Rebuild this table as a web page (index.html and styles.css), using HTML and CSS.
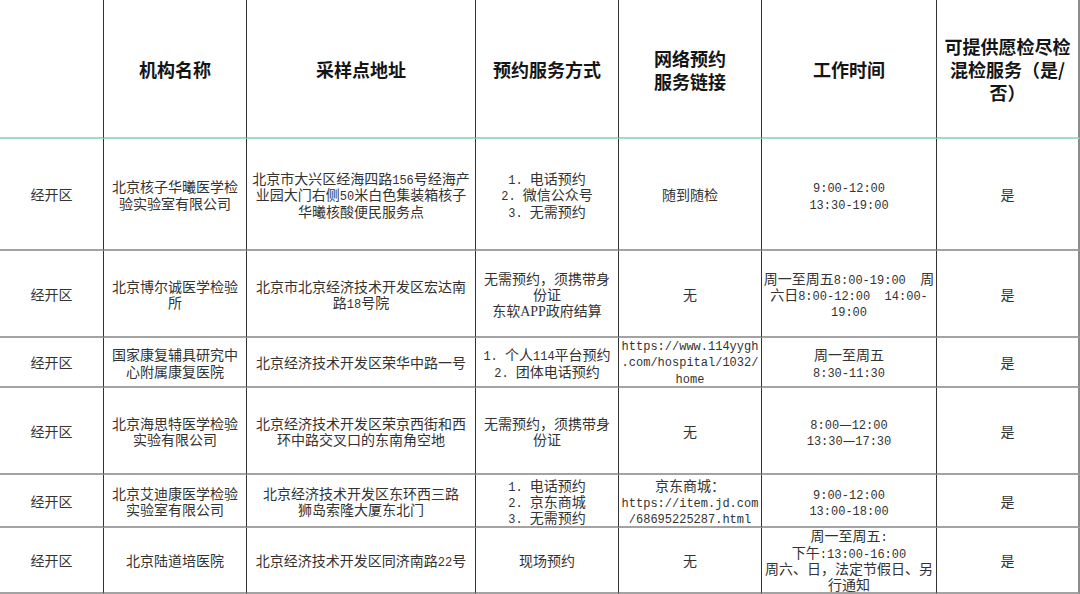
FILE: index.html
```html
<!DOCTYPE html>
<html lang="zh-CN">
<head>
<meta charset="utf-8">
<title>核酸检测采样点</title>
<link rel="stylesheet" href="styles.css">
</head>
<body>
<div class="sheet">
  <div class="cell head"><p class="txt"></p></div>
  <div class="cell head"><p class="txt">机构名称</p></div>
  <div class="cell head"><p class="txt">采样点地址</p></div>
  <div class="cell head"><p class="txt">预约服务方式</p></div>
  <div class="cell head"><p class="txt">网络预约<br>服务链接</p></div>
  <div class="cell head"><p class="txt">工作时间</p></div>
  <div class="cell head last"><p class="txt">可提供愿检尽检<br>混检服务（是/<br>否）</p></div>

  <div class="cell"><p class="txt">经开区</p></div>
  <div class="cell"><p class="txt">北京核子华曦医学检<br>验实验室有限公司</p></div>
  <div class="cell"><p class="txt">北京市大兴区经海四路<span class="en">156</span>号经海产<br>业园大门右侧<span class="en">50</span>米白色集装箱核子<br>华曦核酸便民服务点</p></div>
  <div class="cell"><p class="txt"><span class="en">1. </span>电话预约<br><span class="en">2. </span>微信公众号<br><span class="en">3. </span>无需预约</p></div>
  <div class="cell"><p class="txt">随到随检</p></div>
  <div class="cell"><p class="txt"><span class="en">9:00-12:00</span><br><span class="en">13:30-19:00</span></p></div>
  <div class="cell last"><p class="txt">是</p></div>

  <div class="cell"><p class="txt">经开区</p></div>
  <div class="cell"><p class="txt">北京博尔诚医学检验<br>所</p></div>
  <div class="cell"><p class="txt">北京市北京经济技术开发区宏达南<br>路<span class="en">18</span>号院</p></div>
  <div class="cell"><p class="txt">无需预约，须携带身<br>份证<br>东软<span class="lat">APP</span>政府结算</p></div>
  <div class="cell"><p class="txt">无</p></div>
  <div class="cell"><p class="txt">周一至周五<span class="en">8:00-19:00  </span>周<br>六日<span class="en">8:00-12:00  14:00-</span><br><span class="en">19:00</span></p></div>
  <div class="cell last"><p class="txt">是</p></div>

  <div class="cell"><p class="txt">经开区</p></div>
  <div class="cell"><p class="txt">国家康复辅具研究中<br>心附属康复医院</p></div>
  <div class="cell"><p class="txt">北京经济技术开发区荣华中路一号</p></div>
  <div class="cell"><p class="txt"><span class="en">1. </span>个人<span class="en">114</span>平台预约<br><span class="en">2. </span>团体电话预约</p></div>
  <div class="cell"><p class="txt url">https://www.114yygh<br>.com/hospital/1032/<br>home</p></div>
  <div class="cell"><p class="txt">周一至周五<br><span class="en">8:30-11:30</span></p></div>
  <div class="cell last"><p class="txt">是</p></div>

  <div class="cell"><p class="txt">经开区</p></div>
  <div class="cell"><p class="txt">北京海思特医学检验<br>实验有限公司</p></div>
  <div class="cell"><p class="txt">北京经济技术开发区荣京西街和西<br>环中路交叉口的东南角空地</p></div>
  <div class="cell"><p class="txt">无需预约，须携带身<br>份证</p></div>
  <div class="cell"><p class="txt">无</p></div>
  <div class="cell"><p class="txt"><span class="en">8:00</span>—<span class="en">12:00</span><br><span class="en">13:30</span>—<span class="en">17:30</span></p></div>
  <div class="cell last"><p class="txt">是</p></div>

  <div class="cell"><p class="txt">经开区</p></div>
  <div class="cell"><p class="txt">北京艾迪康医学检验<br>实验室有限公司</p></div>
  <div class="cell"><p class="txt">北京经济技术开发区东环西三路<br>狮岛索隆大厦东北门</p></div>
  <div class="cell"><p class="txt"><span class="en">1. </span>电话预约<br><span class="en">2. </span>京东商城<br><span class="en">3. </span>无需预约</p></div>
  <div class="cell"><p class="txt">京东商城：<br><span class="en">https://item.jd.com</span><br><span class="en">/68695225287.html</span></p></div>
  <div class="cell"><p class="txt"><span class="en">9:00-12:00</span><br><span class="en">13:00-18:00</span></p></div>
  <div class="cell last"><p class="txt">是</p></div>

  <div class="cell"><p class="txt">经开区</p></div>
  <div class="cell"><p class="txt">北京陆道培医院</p></div>
  <div class="cell"><p class="txt">北京经济技术开发区同济南路<span class="en">22</span>号</p></div>
  <div class="cell"><p class="txt">现场预约</p></div>
  <div class="cell"><p class="txt">无</p></div>
  <div class="cell"><p class="txt tight">周一至周五<span class="en">:</span><br>下午<span class="en">:13:00-16:00</span><br>周六、日，法定节假日、另<br>行通知</p></div>
  <div class="cell last"><p class="txt">是</p></div>
</div>
</body>
</html>
```

FILE: styles.css
```css
html, body {
  margin: 0;
  padding: 0;
  background: #ffffff;
}

body {
  width: 1080px;
  height: 594px;
  overflow: hidden;
  font-family: "Noto Sans CJK SC", "Noto Sans", sans-serif;
}

.sheet {
  display: grid;
  grid-template-columns: 104px 143px 229px 143px 143px 175px 143px;
  grid-template-rows: 139px 112px 87px 50px 87px 53px 66px;
  width: 1080px;
}

.cell {
  box-sizing: border-box;
  display: flex;
  align-items: center;
  justify-content: center;
  border-right: 1px solid #333333;
  border-bottom: 2px solid #a3a3a3;
  color: #333333;
  overflow: visible;
}

.cell.last {
  border-right: 2px solid #8c8c8c;
}

.txt {
  margin: 0;
  padding: 1px 0 0;
  text-align: center;
  white-space: nowrap;
  font-size: 14px;
  line-height: 16.3px;
}

.txt.tight {
  padding: 0;
  line-height: 16.3px;
}

.head .txt {
  font-size: 18px;
  font-weight: 700;
  line-height: 23px;
  color: #151515;
  padding-top: 2px;
}

.cell.head {
  border-bottom: 2px solid #a2dcc9;
}

.txt.url {
  font-family: "Liberation Mono", "DejaVu Sans Mono", monospace;
  font-size: 12px;
  line-height: 16.5px;
  padding-top: 3px;
}

.en {
  font-family: "Liberation Mono", "DejaVu Sans Mono", monospace;
  font-size: 12px;
  line-height: 0;
  white-space: pre;
}

.lat {
  font-family: "Liberation Serif", serif;
  font-size: 14px;
  line-height: 0;
}
```
